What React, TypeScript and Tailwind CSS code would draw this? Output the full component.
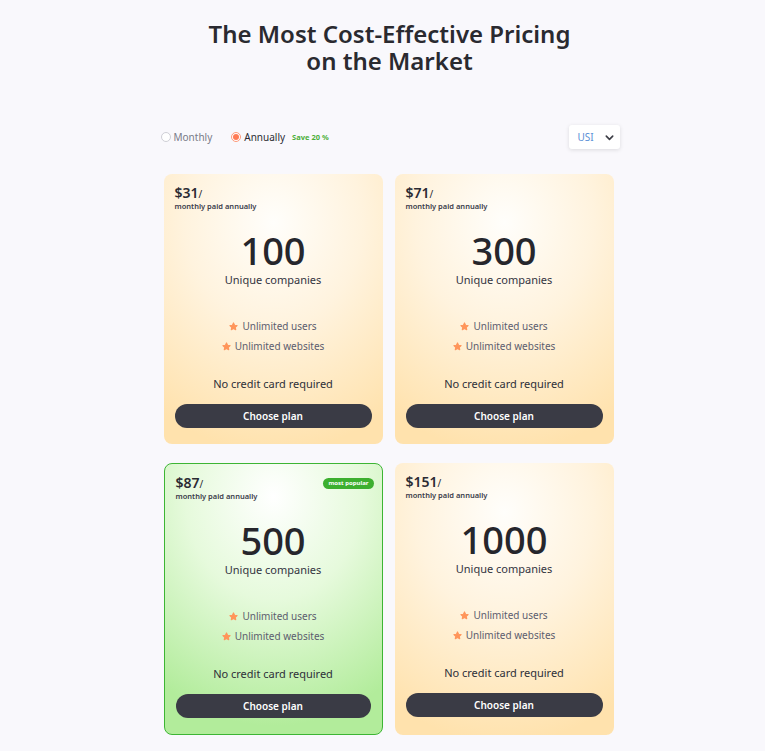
import React from 'react'

type Plan = {
  price: string
  count: string
  popular?: boolean
}

const PLANS: Plan[] = [
  { price: '$31', count: '100' },
  { price: '$71', count: '300' },
  { price: '$87', count: '500', popular: true },
  { price: '$151', count: '1000' },
]

const FONT = "font-['Noto_Sans',_'Open_Sans',_sans-serif]"

/** Small rounded star used as the feature bullet. */
function Star() {
  return (
    <svg width="9" height="9" viewBox="0 0 24 24" className="shrink-0">
      <path
        d="M12 2.5l2.9 6 6.6.9-4.8 4.6 1.2 6.5L12 17.4l-5.9 3.1 1.2-6.5-4.8-4.6 6.6-.9z"
        fill="#ff955a"
        stroke="#ff955a"
        strokeWidth="3"
        strokeLinejoin="round"
      />
    </svg>
  )
}

function Card({ plan }: { plan: Plan }) {
  const bg = plan.popular
    ? 'bg-[radial-gradient(ellipse_90%_85%_at_50%_12%,#ffffff_0%,#e6fadc_45%,#b2ec9b_100%)] border border-[#3db534]'
    : 'bg-[radial-gradient(ellipse_90%_85%_at_50%_18%,#fffefb_0%,#fff3de_45%,#ffe2ad_100%)]'
  return (
    <div className={`relative flex flex-col rounded-lg ${bg} px-[11px] pt-[11px] pb-[16px]`}>
      {plan.popular && (
        <span className="absolute right-[8px] top-[14px] rounded-full bg-[#3caf2f] px-[5px] text-[6px] font-bold leading-[11px] text-white">
          most popular
        </span>
      )}
      <div className="flex items-baseline leading-[16px]">
        <span className="text-[14px] font-semibold text-[#2b2b33]">{plan.price}</span>
        <span className="text-[10px] text-[#2b2b33]">/</span>
      </div>
      <div className="text-[7.5px] font-semibold leading-[9px] text-[#3a3b4a]">monthly paid annually</div>
      <div className="mt-[20px] text-center text-[38px] font-medium leading-[38px] text-[#26262c]">{plan.count}</div>
      <div className="mt-[4px] text-center text-[11px] leading-[14px] text-[#33343f]">Unique companies</div>
      <div className="mt-[32px] flex flex-col items-center gap-[6px] text-[10px] leading-[14px] text-[#5c5d6e]">
        <div className="flex items-center gap-[4px]">
          <Star />
          <span>Unlimited users</span>
        </div>
        <div className="flex items-center gap-[4px]">
          <Star />
          <span>Unlimited websites</span>
        </div>
      </div>
      <div className="mt-[24px] text-center text-[11px] leading-[14px] text-[#2e2f38]">No credit card required</div>
      <button className="mt-[13px] h-[24px] w-full rounded-full bg-[#3a3b45] text-[10px] font-semibold text-white">
        Choose plan
      </button>
    </div>
  )
}

export default function App() {
  return (
    <div className={`min-h-screen bg-[#f9f8fc] ${FONT} flex justify-center pl-[14px]`}>
      <div className="flex w-[460px] flex-col pt-[20px] pb-[16px]">
        <h1 className="flex flex-col items-center text-[24px] font-semibold leading-[27px] text-[#2a2a30]">
          <span>The Most Cost-Effective Pricing</span>
          <span>on the Market</span>
        </h1>

        <div className="mt-[51px] flex items-center justify-between">
          <div className="flex items-center pl-[1px] text-[10px] leading-[14px]">
            <span className="h-[10px] w-[10px] rounded-full border border-[#cfcfd6] bg-white" />
            <span className="ml-[3px] text-[#7a7b88]">Monthly</span>
            <span className="ml-[19px] flex h-[10px] w-[10px] items-center justify-center rounded-full border border-[#ff9a7a] bg-white">
              <span className="h-[6px] w-[6px] rounded-full bg-[#ff7b55]" />
            </span>
            <span className="ml-[3px] text-[#2b2b33]">Annually</span>
            <span className="ml-[7px] text-[7.5px] font-bold text-[#4caf3a]">Save 20 %</span>
          </div>
          <div className="flex h-[24px] w-[51px] items-center justify-between rounded-[3px] bg-white pl-[9px] pr-[5px] shadow-[0_1px_4px_rgba(0,0,0,0.12)]">
            <span className="text-[10px] text-[#5b8fd6]">USI</span>
            <svg width="11" height="11" viewBox="0 0 24 24" fill="none" stroke="#3c3d45" strokeWidth="3.5" strokeLinecap="round" strokeLinejoin="round">
              <path d="M5 9l7 7 7-7" />
            </svg>
          </div>
        </div>

        <div className="ml-[4px] mt-[25px] grid grid-cols-[219px_219px] gap-x-[12px] gap-y-[19px]">
          {PLANS.map((p) => (
            <Card key={p.count} plan={p} />
          ))}
        </div>
      </div>
    </div>
  )
}
